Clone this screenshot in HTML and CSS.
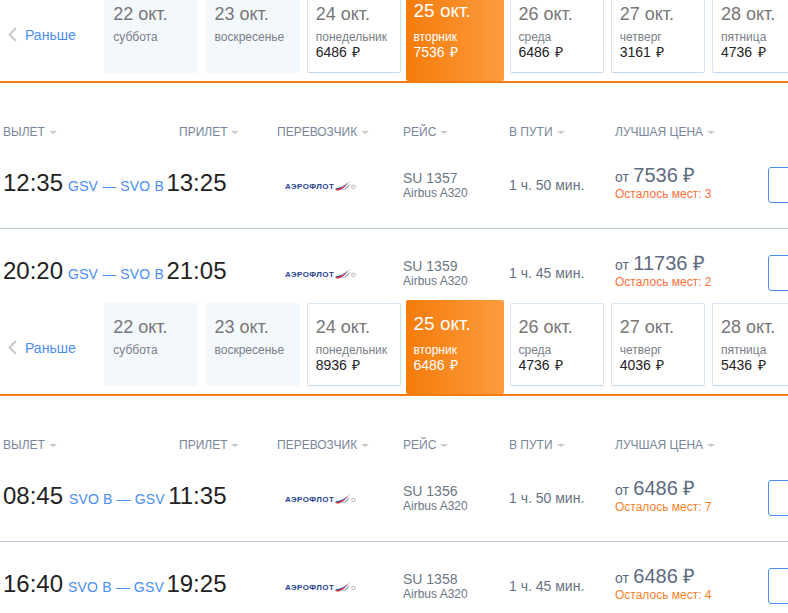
FILE: index.html
```html
<!DOCTYPE html>
<html lang="ru">
<head>
<meta charset="utf-8">
<title>Рейсы</title>
<link rel="stylesheet" href="styles.css">
</head>
<body>
<svg class="defs" width="0" height="0" aria-hidden="true">
  <symbol id="aeroflot-wing" viewBox="0 0 22 10">
    <path d="M1 8.5 C6 8 11 5.5 15 1 C12.5 5 9 8.2 4.5 9.5 C3 9.8 1.8 9.4 1 8.5 Z" fill="#d9232e"/>
    <path d="M1 7.5 C6 7 10 5 14 1.5 C11 5 8 6.8 4.5 7.9 C3 8.2 1.8 8 1 7.5 Z" fill="#2a56a8"/>
    <path d="M8 9 C11.5 8 14 5.5 15.5 2.5 C15 5.5 12.5 8.4 8 9 Z" fill="#2a56a8"/>
    <path d="M14.5 1.5 L16.5 0 L15.2 2 Z" fill="#b8bcc8"/>
    <circle cx="19.5" cy="6" r="1.8" fill="none" stroke="#aab0ba" stroke-width=".9"/>
  </symbol>
</svg>

<div class="page">
  <section class="panel">
    <div class="strip">
      <a class="earlier"><svg class="chevron" width="9" height="15" viewBox="0 0 9 15"><path d="M8 1 L1.5 7.5 L8 14" fill="none" stroke="#c9c9c9" stroke-width="2"/></svg><span>Раньше</span></a>
      <div class="card card-empty"><div class="date">22 окт.</div><div class="day">суббота</div></div>
      <div class="card card-empty"><div class="date">23 окт.</div><div class="day">воскресенье</div></div>
      <div class="card"><div class="date">24 окт.</div><div class="day">понедельник</div><div class="cost">6486 ₽</div></div>
      <div class="card card-active"><div class="date">25 окт.</div><div class="day">вторник</div><div class="cost">7536 ₽</div></div>
      <div class="card"><div class="date">26 окт.</div><div class="day">среда</div><div class="cost">6486 ₽</div></div>
      <div class="card"><div class="date">27 окт.</div><div class="day">четверг</div><div class="cost">3161 ₽</div></div>
      <div class="card"><div class="date">28 окт.</div><div class="day">пятница</div><div class="cost">4736 ₽</div></div>
    </div>
    <div class="grid heads">
      <div class="head head-first">Вылет<i class="caret"></i></div>
      <div class="head">Прилет<i class="caret"></i></div>
      <div class="head">Перевозчик<i class="caret"></i></div>
      <div class="head">Рейс<i class="caret"></i></div>
      <div class="head">В пути<i class="caret"></i></div>
      <div class="head">Лучшая цена<i class="caret"></i></div>
    </div>
    <div class="grid row">
      <div class="times"><span class="time">12:35</span><span class="route">GSV — SVO B</span><span class="time">13:25</span></div>
      <div class="logo"><span class="logo-text">АЭРОФЛОТ</span><svg class="wing" width="22" height="10"><use href="#aeroflot-wing"/></svg></div>
      <div class="flight"><div class="flight-no">SU 1357</div><div class="plane">Airbus A320</div></div>
      <div class="duration">1 ч. 50 мин.</div>
      <div class="price"><div class="amount"><span class="from">от</span> <span class="sum">7536 ₽</span></div><div class="seats seats-red">Осталось мест: 3</div></div>
      <div class="buy"></div>
    </div>
    <div class="grid row">
      <div class="times"><span class="time">20:20</span><span class="route">GSV — SVO B</span><span class="time">21:05</span></div>
      <div class="logo"><span class="logo-text">АЭРОФЛОТ</span><svg class="wing" width="22" height="10"><use href="#aeroflot-wing"/></svg></div>
      <div class="flight"><div class="flight-no">SU 1359</div><div class="plane">Airbus A320</div></div>
      <div class="duration">1 ч. 45 мин.</div>
      <div class="price"><div class="amount"><span class="from">от</span> <span class="sum">11736 ₽</span></div><div class="seats seats-red">Осталось мест: 2</div></div>
      <div class="buy"></div>
    </div>
  </section>

  <section class="panel panel-return">
    <div class="strip">
      <a class="earlier"><svg class="chevron" width="9" height="15" viewBox="0 0 9 15"><path d="M8 1 L1.5 7.5 L8 14" fill="none" stroke="#c9c9c9" stroke-width="2"/></svg><span>Раньше</span></a>
      <div class="card card-empty"><div class="date">22 окт.</div><div class="day">суббота</div></div>
      <div class="card card-empty"><div class="date">23 окт.</div><div class="day">воскресенье</div></div>
      <div class="card"><div class="date">24 окт.</div><div class="day">понедельник</div><div class="cost">8936 ₽</div></div>
      <div class="card card-active"><div class="date">25 окт.</div><div class="day">вторник</div><div class="cost">6486 ₽</div></div>
      <div class="card"><div class="date">26 окт.</div><div class="day">среда</div><div class="cost">4736 ₽</div></div>
      <div class="card"><div class="date">27 окт.</div><div class="day">четверг</div><div class="cost">4036 ₽</div></div>
      <div class="card"><div class="date">28 окт.</div><div class="day">пятница</div><div class="cost">5436 ₽</div></div>
    </div>
    <div class="grid heads">
      <div class="head head-first">Вылет<i class="caret"></i></div>
      <div class="head">Прилет<i class="caret"></i></div>
      <div class="head">Перевозчик<i class="caret"></i></div>
      <div class="head">Рейс<i class="caret"></i></div>
      <div class="head">В пути<i class="caret"></i></div>
      <div class="head">Лучшая цена<i class="caret"></i></div>
    </div>
    <div class="grid row">
      <div class="times"><span class="time">08:45</span><span class="route">SVO B — GSV</span><span class="time">11:35</span></div>
      <div class="logo"><span class="logo-text">АЭРОФЛОТ</span><svg class="wing" width="22" height="10"><use href="#aeroflot-wing"/></svg></div>
      <div class="flight"><div class="flight-no">SU 1356</div><div class="plane">Airbus A320</div></div>
      <div class="duration">1 ч. 50 мин.</div>
      <div class="price"><div class="amount"><span class="from">от</span> <span class="sum">6486 ₽</span></div><div class="seats">Осталось мест: 7</div></div>
      <div class="buy"></div>
    </div>
    <div class="grid row">
      <div class="times"><span class="time">16:40</span><span class="route">SVO B — GSV</span><span class="time">19:25</span></div>
      <div class="logo"><span class="logo-text">АЭРОФЛОТ</span><svg class="wing" width="22" height="10"><use href="#aeroflot-wing"/></svg></div>
      <div class="flight"><div class="flight-no">SU 1358</div><div class="plane">Airbus A320</div></div>
      <div class="duration">1 ч. 45 мин.</div>
      <div class="price"><div class="amount"><span class="from">от</span> <span class="sum">6486 ₽</span></div><div class="seats">Осталось мест: 4</div></div>
      <div class="buy"></div>
    </div>
  </section>
</div>
</body>
</html>
```

FILE: styles.css
```css
* { box-sizing: border-box; }

html, body {
  margin: 0;
  height: 100%;
  overflow: hidden;
  background: #fff;
}

body {
  font-family: "Liberation Sans", Arial, sans-serif;
  color: #222;
}

.defs { position: absolute; }

.page { margin-top: -16px; }

.panel {
  height: 313px;
  overflow: hidden;
  --rule: #b9cbd6;
}

.panel-return { --rule: #bcc9e2; }

/* Date strip */
.strip {
  display: flex;
  align-items: flex-start;
  gap: 7.25px;
  height: 99px;
  padding-top: 6px;
  border-bottom: 2px solid #f77d0e;
}

.earlier {
  flex: 0 0 97px;
  display: flex;
  align-items: center;
  gap: 8px;
  height: 83px;
  padding: 6px 0 0 8px;
  font-size: 14px;
  color: #4a8ef0;
}

.chevron { flex: none; }

.card {
  flex: 0 0 94px;
  height: 83px;
  padding: 13px 0 0 8px;
  background: #fff;
  border: 1px solid #d6e3f0;
  border-bottom-color: #c5d8ea;
  border-radius: 2px;
}

.card-empty {
  background: #f3f8fd;
  border-color: #f3f8fd;
}

.card-active {
  flex-basis: 98px;
  height: 94px;
  margin: -3px -1.25px 0 -2.5px;
  padding: 14px 0 0 8px;
  border: 0;
  color: #fff;
  background: linear-gradient(90deg, #f57c0c, #fb9b3e);
}

.date {
  margin-bottom: 6px;
  font-size: 18px;
  line-height: 20px;
  color: #777;
}

.day {
  font-size: 12px;
  line-height: 14px;
  color: #7a7f88;
}

.cost {
  font-size: 14px;
  line-height: 16px;
  word-spacing: 1.5px;
  color: #222;
}

.card-active .date {
  margin-bottom: 9px;
  font-size: 19px;
  color: #fff;
}

.card-active .day,
.card-active .cost { color: #fff; }

/* Shared columns */
.grid {
  display: grid;
  grid-template-columns: 179px 98px 126px 106px 106px 153px 1fr;
}

.heads {
  height: 58px;
  padding-top: 41px;
}

.head {
  font-size: 12px;
  line-height: 16px;
  text-transform: uppercase;
  color: #78869a;
}

.head-first { padding-left: 3px; }

.caret {
  display: inline-block;
  margin-left: 4px;
  vertical-align: 2px;
  border-style: solid;
  border-width: 3px 4px 0;
  border-color: #c8c8c8 transparent transparent;
}

/* Rows */
.row {
  align-items: center;
  height: 88px;
  border-bottom: 1px solid var(--rule);
}

.times {
  grid-column: span 2;
  display: flex;
  justify-content: space-between;
  align-items: baseline;
  width: 226.5px;
  padding: 0 0 3px 3px;
}

.time {
  font-size: 24px;
  line-height: 28px;
  color: #222;
}

.route {
  margin-left: 2.5px;
  font-size: 14px;
  letter-spacing: .15px;
  color: #4a8ef0;
}

.logo {
  display: flex;
  align-items: flex-end;
  margin: 3px 0 0 8px;
}

.logo-text {
  font-size: 8px;
  font-weight: 700;
  line-height: 8px;
  letter-spacing: .4px;
  color: #1f3f8f;
}

.wing { flex: none; }

.flight-no {
  font-size: 14px;
  line-height: 16px;
  color: #6b7785;
}

.plane {
  font-size: 12px;
  line-height: 14px;
  color: #6b7785;
}

.duration {
  font-size: 14px;
  line-height: 16px;
  color: #66727f;
}

.price { padding-bottom: 5px; }

.amount {
  line-height: 22px;
  color: #5d6b7e;
}

.from { font-size: 14px; }

.sum { font-size: 20px; }

.seats {
  margin-top: -1px;
  font-size: 12px;
  line-height: 14px;
  color: #f7811f;
}

.seats-red { color: #f8703a; }

.buy {
  width: 40px;
  height: 36px;
  border: 1px solid #4a8ef0;
  border-radius: 3px;
}
```
